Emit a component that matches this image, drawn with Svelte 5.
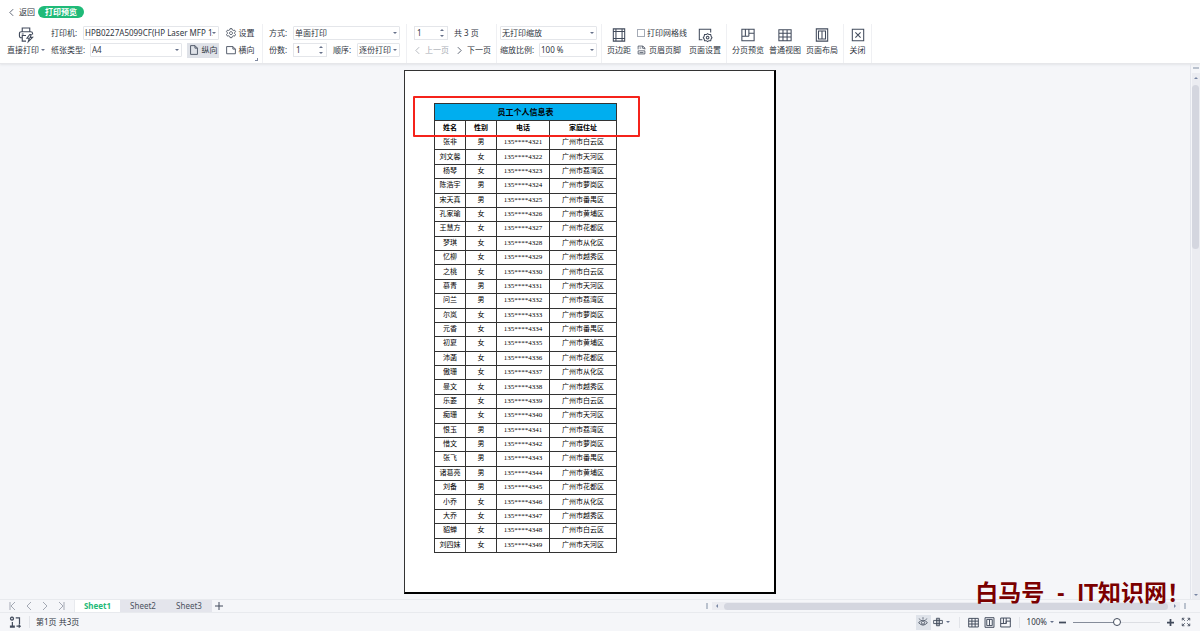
<script lang="ts">
	type Row = { name: string; sex: string; tail: number; area: string };

	const areas = ['白云', '天河', '荔湾', '萝岗', '番禺', '黄埔', '花都', '从化', '越秀'];
	const people =
		'张非男 刘文馨女 杨琴女 陈浩宇男 宋天真男 孔家瑜女 王慧方女 梦琪女 忆柳女 之桃女 慕青男 问兰男 尔岚女 元香女 初夏女 沛菡女 傲珊女 曼文女 乐菱女 痴珊女 恨玉男 惜文男 张飞男 诸葛亮男 刘备男 小乔女 大乔女 貂蝉女 刘四妹女';

	const rows: Row[] = people.split(' ').map((p, i) => ({
		name: p.slice(0, -1),
		sex: p.slice(-1),
		tail: 4321 + i,
		area: `广州市${areas[i % areas.length]}区`
	}));

	const sheets = ['Sheet1', 'Sheet2', 'Sheet3'];
	let active = $state('Sheet1');
	let landscape = $state(false);
	let copies = $state('1');
	let pageNo = $state('1');
	let gridlines = $state(false);
	let zoom = $state(100);

	const icons = {
		print: 'M4 5V1h8v4M4 11.500H3a2 2 0 0 1-2-2V7a2 2 0 0 1 2-2h10a2 2 0 0 1 2 2v1M3.500 7.500h2M8 9H4v6h4M12 8l-3 4h2.500l-1 3.500L15 11h-2.500l1-3z',
		margin: 'M1.500 1h13v14h-13zM4.500 1v14M11.500 1v14M1.500 4h13M1.500 12h13',
		split: 'M1 1.500h14v13H1zM5 1.500v8M9 1.500v8M1 9.500h8M9 9.500V6h6',
		grid: 'M1 2h14v12.500H1zM1 6h14M1 10.200h14M5.700 2v12.500M10.400 2v12.500',
		layout: 'M1.500 1h13v14h-13zM4 3.500h8v9H4zM8 3.500v9',
		close: 'M1.500 1.500h13v13h-13zM5 5l6 6M11 5l-6 6',
		portrait: 'M2.500 1h7l4 4v10h-11zM9.500 1v4h4',
		wide: 'M1 2.500h10l4 4v7.500H1zM11 2.500v4h4',
		gear: 'M6.500 1h3l.6 2 1.600.9 2-.5 1.500 2.600-1.400 1.500v1.400l1.400 1.500-1.500 2.600-2-.5-1.600.9-.6 2h-3l-.6-2-1.600-.9-2 .5L.8 10.400 2.200 8.900V7.500L.8 6l1.500-2.600 2 .5 1.600-.9zM8 5.800a2.400 2.400 0 1 0 .01 0',
		setup: 'M5 13.500H1.500v-12h13V5M11 6.500l1.500 1 2 0 .500 2 1 1.500-1 1.500-.500 2h-2l-1.500 1-1.500-1h-2l-.500-2-1-1.500 1-1.500.500-2h2zM11 9.500a1.500 1.500 0 1 0 .01 0',
		footer: 'M2 7V1h8.500L14 4.500V7M10 1v4h4M2 9.500V15h12V9.500zM4.500 4.500h3M4.500 12.500h7',
		eye: 'M1 9q7-8 14 0q-7 8-14 0zM8 6.500a2.500 2.500 0 1 0 .01 0M8 3V.500M3.500 4.500L2 2.500M12.500 4.500l1.500-2',
		cross: 'M5.500 2h5v12h-5zM1 5.500h14v5H1zM8 2v12',
		full: 'M5.500 2H2v3.500M2 2l4 4M10.500 2H14v3.500M14 2l-4 4M2 10.500V14h3.500M2 14l4-4M14 10.500V14h-3.500M14 14l-4-4',
		record: 'M4 1.500a2 2 0 1 0 .01 0M4 3.500h.1M9 2.500h5v8.500M4.500 8v4.500M2 13.500h5v1.500H2zM10 13.500h5M13 11.500l2 2-2 2'
	};
</script>

<svelte:head><title>打印预览</title></svelte:head>

{#snippet icon(name: keyof typeof icons, cls = '')}
	<svg class="icon {cls}" viewBox="0 0 16 16" aria-hidden="true"><path d={icons[name]} /></svg>
{/snippet}

{#snippet pick(label: string, value: string)}
	<span class="pick">
		<select aria-label={label}><option>{value}</option></select>
		<i class="caret"></i>
	</span>
{/snippet}

{#snippet tool(name: keyof typeof icons, label: string)}
	<button class="tool">{@render icon(name)}<span>{label}</span></button>
{/snippet}

<div class="app">
	<header>
		<div class="top">
			<button class="back">
				<svg class="chev" viewBox="0 0 6 10"><path d="M5 1L1 5l4 4" /></svg>返回
			</button>
			<h1>打印预览</h1>
		</div>

		<div class="ribbon">
			<section class="printer">
				<button class="tool">
					{@render icon('print', 'big')}
					<span>直接打印<i class="caret"></i></span>
				</button>
				<div class="lines">
					<div class="line">
						<span class="label">打印机:</span>
						{@render pick('打印机', 'HPB0227A5099CF(HP Laser MFP 131')}
						<button class="mini">{@render icon('gear')}设置</button>
					</div>
					<div class="line">
						<span class="label wide">纸张类型:</span>
						{@render pick('纸张类型', 'A4')}
						<button class="mini" class:on={!landscape} onclick={() => (landscape = false)}>
							{@render icon('portrait')}纵向
						</button>
						<button class="mini" class:on={landscape} onclick={() => (landscape = true)}>
							{@render icon('wide')}横向
						</button>
					</div>
				</div>
				<i class="corner"></i>
			</section>

			<section class="mode">
				<div class="lines">
					<div class="line">
						<span class="label short">方式:</span>
						{@render pick('方式', '单面打印')}
					</div>
					<div class="line">
						<label class="label short" for="copies">份数:</label>
						<span class="spin"><input id="copies" bind:value={copies} /><i></i></span>
						<span class="label short">顺序:</span>
						{@render pick('顺序', '逐份打印')}
					</div>
				</div>
			</section>

			<section class="pager">
				<div class="lines">
					<div class="line">
						<span class="spin"><input aria-label="页码" bind:value={pageNo} /><i></i></span>
						<span>共 3 页</span>
					</div>
					<div class="line nav">
						<button disabled><svg class="chev" viewBox="0 0 6 10"><path d="M5 1L1 5l4 4" /></svg>上一页</button>
						<button><svg class="chev" viewBox="0 0 6 10"><path d="M1 1l4 4-4 4" /></svg>下一页</button>
					</div>
				</div>
			</section>

			<section class="scale">
				<div class="lines">
					<div class="line">{@render pick('打印缩放', '无打印缩放')}</div>
					<div class="line">
						<span class="label wide">缩放比例:</span>
						{@render pick('缩放比例', '100 %')}
					</div>
				</div>
			</section>

			<section class="setup">
				{@render tool('margin', '页边距')}
				<div class="lines">
					<label class="line check"><input type="checkbox" bind:checked={gridlines} />打印网格线</label>
					<button class="line check">{@render icon('footer', 'small')}页眉页脚</button>
				</div>
				{@render tool('setup', '页面设置')}
			</section>

			<section class="views">
				{@render tool('split', '分页预览')}
				{@render tool('grid', '普通视图')}
				{@render tool('layout', '页面布局')}
			</section>

			<section class="exit">{@render tool('close', '关闭')}</section>
		</div>
	</header>

	<main>
		<div class="canvas">
			<article class="sheet">
				<table>
					<colgroup><col class="c1" /><col class="c1" /><col class="c3" /><col /></colgroup>
					<thead>
						<tr class="title"><th colspan="4">员工个人信息表</th></tr>
						<tr class="head"><th>姓名</th><th>性别</th><th>电话</th><th>家庭住址</th></tr>
					</thead>
					<tbody>
						{#each rows as row (row.tail)}
							<tr><td>{row.name}</td><td>{row.sex}</td><td>135****{row.tail}</td><td>{row.area}</td></tr>
						{/each}
					</tbody>
				</table>
				<div class="mark"></div>
			</article>
			<div class="brand">白马号  -  IT知识网！</div>
		</div>
		<div class="vbar">
			<i class="grip"></i>
			<div class="track"><i class="up"></i><b></b><i class="down"></i></div>
		</div>
	</main>

	<div class="tabs">
		<nav>
			<button aria-label="首个"><svg viewBox="0 0 8 8"><path d="M1 0v8M6 0L2 4l4 4" /></svg></button>
			<button aria-label="向前"><svg viewBox="0 0 8 8"><path d="M6 0L2 4l4 4" /></svg></button>
			<button aria-label="向后"><svg viewBox="0 0 8 8"><path d="M2 0l4 4-4 4" /></svg></button>
			<button aria-label="末个"><svg viewBox="0 0 8 8"><path d="M7 0v8M2 0l4 4-4 4" /></svg></button>
		</nav>
		{#each sheets as s}
			<button class="tab" class:active={active === s} onclick={() => (active = s)}>{s}</button>
		{/each}
		<button class="add" aria-label="新建"><svg viewBox="0 0 8 8"><path d="M4 0v8M0 4h8" /></svg></button>
		<div class="hbar">
			<i class="grip"></i>
			<div class="track"><i class="prev"></i><b></b><i class="next"></i></div>
			<i class="grip"></i>
		</div>
	</div>

	<footer>
		{@render icon('record', 'rec')}
		<span class="pages">第1页 共3页</span>
		<div class="status">
			<button class="on" aria-label="护眼">{@render icon('eye')}</button>
			<button class="drop" aria-label="阅读">{@render icon('cross')}<i class="caret"></i></button>
			<div class="modes">
				<button aria-label="普通视图">{@render icon('grid')}</button>
				<button aria-label="页面布局">{@render icon('layout')}</button>
				<button aria-label="分页预览">{@render icon('split')}</button>
			</div>
			<button class="pct">{zoom}%<i class="caret"></i></button>
			<button class="step" aria-label="缩小" onclick={() => (zoom -= 10)}><svg viewBox="0 0 8 8"><path d="M0 4h8" /></svg></button>
			<input type="range" aria-label="缩放" min="0" max="200" bind:value={zoom} />
			<button class="step" aria-label="放大" onclick={() => (zoom += 10)}><svg viewBox="0 0 8 8"><path d="M4 0v8M0 4h8" /></svg></button>
			<button class="fit" aria-label="全屏">{@render icon('full')}</button>
		</div>
	</footer>
</div>

<style>
	:global(body) { margin: 0; }
	.app {
		display: flex; flex-direction: column; min-height: 100vh; box-sizing: border-box;
		background: #f5f6f9; color: #303642;
		font: 8px/12px "Noto Sans", "Noto Sans CJK SC", sans-serif;
	}
	.app *, .app *::before, .app *::after { box-sizing: border-box; }
	button, select, input { font: inherit; color: inherit; margin: 0; padding: 0; border: 0; background: none; }
	button { display: flex; align-items: center; white-space: nowrap; }
	svg { flex: none; fill: none; stroke: #424b5c; stroke-width: 1; overflow: visible; }
	.icon { width: 10px; height: 10px; stroke-width: 1.4; }
	.chev { width: 5px; height: 9px; }
	.caret { flex: none; border: 2px solid transparent; border-top-color: #66718a; border-bottom: 0; }

	header { background: #fff; border-bottom: 1px solid #e6e7ea; box-shadow: 0 1px 2px #e3e5e9; }
	.top { display: flex; align-items: center; gap: 3px; height: 24px; padding-left: 9px; }
	.back { gap: 5px; }
	h1 { margin: 0; padding: 0 7px; border-radius: 6px; background: #1fba78; color: #fff; font: inherit; font-weight: bold; }

	.ribbon { display: flex; height: 39px; }
	section { display: flex; flex: none; align-items: center; padding-bottom: 4px; border-right: 1px solid #eff0f3; position: relative; }
	.lines { display: flex; flex-direction: column; gap: 2px; flex: 1; min-width: 0; }
	.line { display: flex; align-items: center; height: 15px; white-space: nowrap; }
	.tool { flex-direction: column; gap: 2px; flex: none; }
	.tool span { display: flex; align-items: center; gap: 2px; }
	.tool .icon { width: 14px; height: 14px; stroke-width: 1.2; }
	.tool .big { width: 16px; height: 15px; }
	.printer { width: 263px; padding-left: 7px; padding-right: 6px; gap: 6px; }
	.corner { position: absolute; right: 4px; bottom: 2px; width: 3px; height: 3px; border: solid #7f89a0; border-width: 0 1px 1px 0; }
	.label { width: 32px; flex: none; }
	.label.wide { width: 39px; }
	.label.short { width: 24px; }
	.pick { display: grid; flex: 1; align-items: center; height: 14px; border: 1px solid #e4e6ea; border-radius: 1px; min-width: 0; background: #fff; }
	.pick select { grid-area: 1 / 1; width: 100%; height: 12px; appearance: none; padding: 0 5px 0 1px; outline: 0; }
	.pick .caret { grid-area: 1 / 1; justify-self: end; margin-right: 2px; pointer-events: none; }
	.spin { display: flex; flex: none; align-items: center; width: 34px; height: 14px; border: 1px solid #e4e6ea; padding: 0 3px 0 2px; }
	.spin input { width: 100%; min-width: 0; outline: 0; }
	.spin i { flex: none; width: 4px; height: 8px; display: flex; flex-direction: column; justify-content: space-between; }
	.spin i::before { content: ""; border: 2px solid transparent; border-bottom-color: #66718a; border-top: 0; }
	.spin i::after { content: ""; border: 2px solid transparent; border-top-color: #66718a; border-bottom: 0; }
	.mini { flex: none; gap: 3px; width: 32px; height: 15px; justify-content: center; margin-left: 5px; }
	.mini.on { background: #dfe2e8; }
	.mode { width: 144px; padding-left: 6px; padding-right: 6px; }
	.mode .spin, .pager .spin { margin-right: 6px; }
	.pager { width: 90px; padding-left: 7px; }
	.nav { gap: 8px; padding-left: 1px; }
	.nav button { gap: 5px; }
	.nav button:disabled { color: #a9adb5; }
	.nav button:disabled svg { stroke: #a9adb5; }
	.scale { width: 105px; padding-left: 3px; padding-right: 4px; }
	.setup { width: 125px; padding-left: 5px; gap: 6px; }
	.setup .lines { flex: none; width: 46px; }
	.check { gap: 2px; }
	.check input { flex: none; appearance: none; width: 8px; height: 8px; border: 1px solid #a5abb6; }
	.check input:checked { background: #1fba78; }
	.small { width: 9px; height: 10px; margin-right: 1px; }
	.views { width: 117px; justify-content: space-evenly; }
	.exit { width: 28px; justify-content: center; }

	main { display: flex; flex: 1; }
	.canvas { position: relative; flex: 1; padding: 6px 10px 5px 0; }
	.sheet {
		position: relative; width: 372px; margin: 0 auto; padding: 32px 157px 39px 29px;
		background: #fff; border: solid #333; border-width: 1px 2px 2px 1px; border-right-color: #000; border-bottom-color: #000;
	}
	table {
		width: 183px; height: 450px; table-layout: fixed; border-collapse: collapse;
		font: 7px/9px "Liberation Serif", "Noto Sans CJK SC", serif; color: #000; text-align: center;
	}
	th, td { padding: 0; border: 1px solid #333; white-space: nowrap; }
	.c1 { width: 31px; }
	.c3 { width: 53px; }
	.title { height: 17px; font-size: 8px; background: #00aeef; }
	.head { height: 15px; }
	.mark { position: absolute; left: 8px; top: 25px; width: 227px; height: 41px; border: 2px solid #f5231b; border-radius: 1px; }
	.brand {
		position: absolute; right: 0; bottom: -6px; color: #7b0000; white-space: pre;
		font: bold 23px/24px "Liberation Sans", "Noto Sans CJK SC", sans-serif;
	}
	.vbar { display: flex; flex-direction: column; align-items: center; width: 10px; border-left: 1px solid #e3e5ec; }
	.grip { flex: none; width: 2px; height: 6px; background: #bac2ce; }
	.vbar .grip { width: 6px; height: 2px; margin: 3px 0 4px; }
	.track { display: flex; align-items: center; flex: 1; background: #ebecf1; }
	.vbar .track { flex-direction: column; width: 8px; padding: 4px 0 3px; }
	.track b { background: #d4d6df; border-radius: 4px; }
	.vbar b { width: 7px; height: 164px; margin: 6px 0 auto; }
	.track i { flex: none; border: 2px solid transparent; }
	.track .up { border-bottom-color: #7885a3; border-top: 0; }
	.track .down { border-top-color: #7885a3; border-bottom: 0; }
	.track .prev { border-right-color: #7885a3; border-left: 0; }
	.track .next { border-left-color: #7885a3; border-right: 0; }

	.tabs { display: flex; height: 14px; border: solid #e8eaee; border-width: 1px 0; }
	.tabs nav { display: flex; align-items: center; gap: 8px; width: 75px; padding-left: 9px; border-right: 1px solid #e8eaee; }
	.tabs svg { width: 8px; height: 8px; }
	.tabs nav svg { stroke: #a4a9b4; }
	.tab { width: 46px; justify-content: center; background: #e4e5ec; color: #4b5260; }
	.tab.active { width: 45px; background: #fff; color: #1fba78; font-weight: bold; }
	.add { padding: 0 3px; }
	.hbar { display: flex; align-items: center; width: 40%; margin: 0 14px 0 auto; gap: 4px; }
	.hbar .track { height: 8px; padding: 0 4px; gap: 6px; }
	.hbar b { flex: 1; height: 7px; }

	footer { display: flex; align-items: center; height: 18px; padding: 0 9px; }
	.rec { width: 12px; height: 12px; stroke-width: 1.6; }
	.pages { margin-left: 8px; padding-left: 6px; border-left: 1px solid #e2e4e9; }
	.status { display: flex; align-items: center; margin-left: auto; }
	footer .on { width: 15px; height: 15px; justify-content: center; background: #dfe3ea; }
	.drop { gap: 3px; margin: 0 9px 0 2px; }
	.modes { display: flex; gap: 5px; padding: 0 8px; border: solid #e2e4e9; border-width: 0 1px; }
	.modes .icon { width: 11px; height: 11px; }
	.pct { gap: 3px; margin: 0 5px 0 7px; }
	.step svg { width: 7px; height: 7px; stroke-width: 2; }
	input[type="range"] {
		appearance: none; width: 87px; height: 9px; margin: 0 7px;
		background: linear-gradient(90deg, #858c9a 50%, #dcdee3 50%) center / 100% 1px no-repeat;
	}
	input[type="range"]::-webkit-slider-thumb {
		appearance: none; width: 8px; height: 8px; background: #fff; border: 1px solid #424b5c; border-radius: 50%;
	}
	.fit { margin-left: 7px; }
</style>
